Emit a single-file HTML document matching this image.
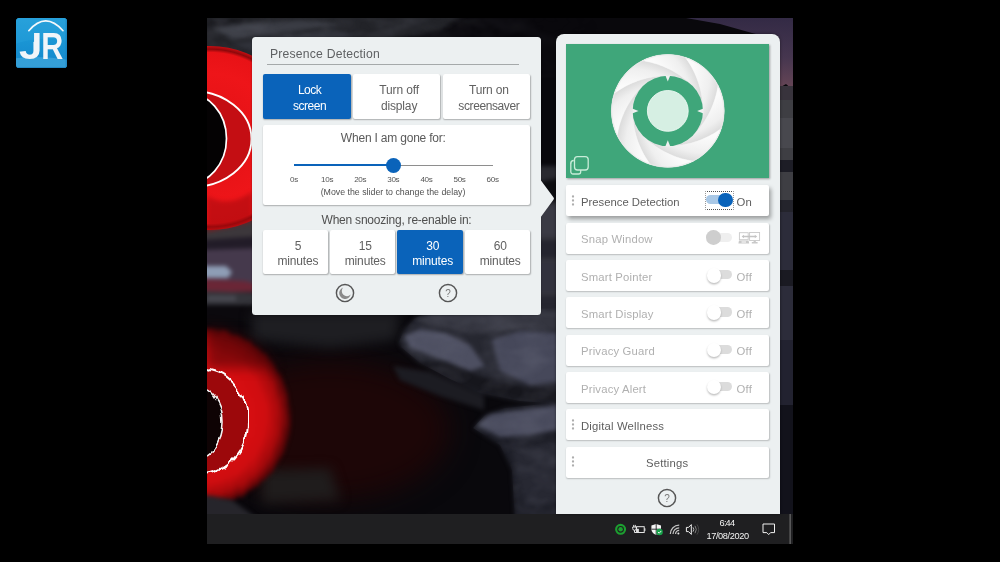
<!DOCTYPE html>
<html lang="en">
<head>
<meta charset="utf-8">
<title>Presence Detection</title>
<style>
html,body{margin:0;padding:0;background:#000;}
body{width:1000px;height:562px;position:relative;overflow:hidden;will-change:transform;font-family:"Liberation Sans",sans-serif;color:#555;}
.abs{position:absolute;}
#desk{position:absolute;left:207px;top:18px;width:586px;height:497px;overflow:hidden;background:#17151b;}
#taskbar{position:absolute;left:207px;top:514px;width:586px;height:30px;background:#1f1f21;}
/* left popup */
#pop{position:absolute;left:252px;top:37.2px;width:289px;height:277.6px;background:#ecf0f1;border-radius:3.5px;box-shadow:0 0 2px rgba(0,0,0,.35);}
.t{position:absolute;white-space:nowrap;text-align:center;transform:translateX(-50%);}
.btn{position:absolute;background:#fff;border-radius:2px;box-shadow:0.5px 1px 1.5px rgba(0,0,0,.28);color:#616161;font-size:12px;line-height:15.2px;text-align:center;letter-spacing:-0.15px;}
.btn.on{background:#0a63ba;color:#fff;}
.btn span{display:block;position:relative;left:2.6px;}
/* right panel */
#side{position:absolute;left:555.7px;top:34.2px;width:223.9px;height:480px;background:#ecf0f1;border-radius:8px 8px 0 0;box-shadow:0 0 3px rgba(0,0,0,.5);}
.row{position:absolute;left:566px;width:203.3px;height:31px;margin-top:-0.3px;background:#fff;border-radius:2px;box-shadow:0.5px 1px 1.5px rgba(0,0,0,.21);}
.row .lb{position:absolute;left:15px;top:1.8px;line-height:31px;font-size:11.3px;letter-spacing:0.18px;color:#b0b0b0;white-space:nowrap;}
.row .st{position:absolute;left:170.5px;top:1.8px;line-height:31px;font-size:11.3px;letter-spacing:0.3px;color:#b0b0b0;}
.row.act .lb,.row.act .st{color:#5e5e5e;}
</style>
</head>
<body>
<!-- JR logo -->
<div class="abs" id="logo" style="left:16px;top:18.3px;width:50.7px;height:50.1px;border-radius:3.5px;background:#1c97d5;overflow:hidden;">
  <svg class="abs" style="left:0;top:0" width="51" height="51" viewBox="16 18.3 51 51">
    <defs><linearGradient id="lg1" x1="0" y1="0" x2="0" y2="1"><stop offset="0" stop-color="#27a0da"/><stop offset="0.45" stop-color="#1a95d4"/><stop offset="0.75" stop-color="#168dcf"/><stop offset="1" stop-color="#1787ca"/></linearGradient><clipPath id="jclip"><path d="M34.05 18 H67 V70 H16 V46 L34.05 42 Z"/></clipPath></defs>
    <rect x="16" y="18.3" width="51" height="51" fill="url(#lg1)"/>
    <path d="M16 44 Q40 36 67 41 V18.3 H16 Z" fill="#2aa2dc" opacity="0.35"/>
    <path d="M16 58.5 Q42 55.5 67 60 V69.4 H16 Z" fill="#49addf" opacity="0.6"/>
    <path d="M66.2 19 V68 H17" fill="none" stroke="#1577b6" stroke-width="1" opacity="0.7"/>
    <path d="M28.8 31 Q45.6 11.4 63 31" fill="none" stroke="#f4f8fb" stroke-width="1.7" stroke-linecap="round"/>
    <text x="19" y="59.8" font-family="Liberation Sans, sans-serif" font-weight="bold" font-size="37.4" fill="#f1f5f9" textLength="23.4" lengthAdjust="spacingAndGlyphs" clip-path="url(#jclip)">J</text>
    <text x="41.3" y="59.8" font-family="Liberation Sans, sans-serif" font-weight="bold" font-size="37.4" fill="#f1f5f9" textLength="22" lengthAdjust="spacingAndGlyphs">R</text>
  </svg>
</div>

<div id="desk">
  <svg class="abs" style="left:0;top:0" width="586" height="497" viewBox="207 18 586 497">
    <defs>
      <filter id="b1" color-interpolation-filters="sRGB" x="-20%" y="-20%" width="140%" height="140%"><feGaussianBlur stdDeviation="0.7"/></filter>
      <filter id="b2" color-interpolation-filters="sRGB" x="-20%" y="-20%" width="140%" height="140%"><feGaussianBlur stdDeviation="2"/></filter>
      <filter id="b3" color-interpolation-filters="sRGB" x="-20%" y="-20%" width="140%" height="140%"><feGaussianBlur stdDeviation="3"/></filter>
      <filter id="b6" color-interpolation-filters="sRGB" x="-60%" y="-60%" width="220%" height="220%"><feGaussianBlur stdDeviation="6"/></filter>
      <filter id="b12" color-interpolation-filters="sRGB" x="-40%" y="-40%" width="180%" height="180%"><feGaussianBlur stdDeviation="14"/></filter>
      <filter id="rough" color-interpolation-filters="sRGB" x="-10%" y="-10%" width="120%" height="120%"><feTurbulence type="fractalNoise" baseFrequency="0.09 0.03" numOctaves="2" seed="4" result="n"/><feDisplacementMap in="SourceGraphic" in2="n" scale="11" xChannelSelector="R" yChannelSelector="G"/><feGaussianBlur stdDeviation="0.55"/></filter>
      <filter id="rough2" color-interpolation-filters="sRGB" x="-10%" y="-10%" width="120%" height="120%"><feTurbulence type="fractalNoise" baseFrequency="0.25 0.05" numOctaves="2" seed="9" result="n"/><feDisplacementMap in="SourceGraphic" in2="n" scale="5" xChannelSelector="R" yChannelSelector="G"/><feGaussianBlur stdDeviation="2.2"/></filter>
      <filter id="rock" color-interpolation-filters="sRGB" x="0" y="0" width="100%" height="100%"><feTurbulence type="fractalNoise" baseFrequency="0.035 0.06" numOctaves="4" seed="11" result="n"/><feColorMatrix in="n" type="matrix" values="0 0 0 0 0  0 0 0 0 0  0 0 0 0 0  1.6 0 0 0 -0.55" result="a"/><feComposite in="SourceGraphic" in2="a" operator="in"/><feGaussianBlur stdDeviation="0.8"/></filter>
      <linearGradient id="sky" x1="0" y1="0" x2="0" y2="1"><stop offset="0" stop-color="#332a45"/><stop offset="0.55" stop-color="#46364f"/><stop offset="1" stop-color="#684656"/></linearGradient>
      <radialGradient id="orb" cx="50%" cy="50%" r="50%"><stop offset="0" stop-color="#e01014"/><stop offset="0.7" stop-color="#ee1519"/><stop offset="0.93" stop-color="#e81216"/><stop offset="0.965" stop-color="#8e080b"/><stop offset="1" stop-color="#c90d11"/></radialGradient>
      <radialGradient id="refl" gradientUnits="userSpaceOnUse" cx="200" cy="417" r="92"><stop offset="0" stop-color="#b0090c"/><stop offset="0.5" stop-color="#d80e11"/><stop offset="0.72" stop-color="#cf0d10"/><stop offset="0.86" stop-color="#a4090b"/><stop offset="1" stop-color="#3c0406"/></radialGradient>
      <linearGradient id="fadeg" gradientUnits="userSpaceOnUse" x1="207" y1="0" x2="600" y2="0"><stop offset="0" stop-color="#fff"/><stop offset="0.45" stop-color="#bbb"/><stop offset="1" stop-color="#000"/></linearGradient><mask id="fadeR" maskUnits="userSpaceOnUse" x="207" y="18" width="400" height="60"><rect x="207" y="18" width="400" height="60" fill="url(#fadeg)"/></mask><clipPath id="rockclip"><path d="M399 342 L404 330 L415 318 L430 312 L562 308 L562 404 L520 401 L480 393 L450 379 L420 363 L401 347 Z"/><path d="M473 428 L485 415 L505 408 L562 402 L562 520 L515 520 L512 470 L500 445 Z"/></clipPath><clipPath id="deskclip"><rect x="207" y="18" width="586" height="497"/></clipPath>
    </defs>
    <g clip-path="url(#deskclip)">
    <rect x="207" y="18" width="586" height="497" fill="#09080c"/>
    <!-- sky top right -->
    <path d="M686 18 L793 18 L793 90 L786 84 L779 88 L779 40 L752 33 L720 24 Z" fill="url(#sky)"/>
    <path d="M686 18 L720 24 L752 33 L779 42 L779 18 Z" fill="url(#sky)" opacity="0"/>
    <!-- right strip rocks -->
    <g filter="url(#b1)">
      <rect x="776" y="86" width="18" height="120" fill="#3e3e43"/>
      <rect x="776" y="86" width="18" height="14" fill="#38333c"/>
      <rect x="776" y="118" width="18" height="30" fill="#48484e"/>
      <rect x="776" y="160" width="18" height="12" fill="#1d1d26"/>
      <rect x="776" y="200" width="18" height="14" fill="#24242c"/>
      <rect x="776" y="212" width="18" height="130" fill="#2c2c3a"/>
      <rect x="776" y="270" width="18" height="16" fill="#1a1a22"/>
      <rect x="776" y="340" width="18" height="70" fill="#222230"/>
      <rect x="776" y="405" width="18" height="110" fill="#12121b"/>
    </g>
    <!-- top-left rock texture -->
    <g filter="url(#b2)">
      <path d="M200 10 L470 10 L440 30 L380 44 L300 62 L200 78 Z" fill="#222328"/>
      <path d="M214 27 L300 20 L345 24 L232 40 Z" fill="#3a3c44"/>
      <path d="M230 44 L330 30 L360 36 L262 54 Z" fill="#30323a"/>
      <path d="M207 18 L260 18 L207 30 Z" fill="#0e0e12"/>
      
    </g>
    <g mask="url(#fadeR)"><rect x="207" y="18" width="400" height="60" fill="#5a5c66" filter="url(#rock)" opacity="0.5"/></g>
    <!-- strip between panels -->
    <g filter="url(#b2)">
      <rect x="536" y="166" width="26" height="150" fill="#34343c"/>
      <rect x="536" y="166" width="26" height="14" fill="#2a2a30"/>
      <path d="M536 182 L562 178 L562 200 L536 206 Z" fill="#0c0c10"/>
      <rect x="536" y="206" width="26" height="30" fill="#3a3a44"/>
      <rect x="536" y="240" width="26" height="18" fill="#24242e"/>
      <rect x="536" y="262" width="26" height="30" fill="#32323e"/>
      <rect x="536" y="296" width="26" height="20" fill="#262630"/>
    </g>
    <!-- rock under orb -->
    <g filter="url(#b2)">
      <path d="M200 226 L262 212 L262 246 L200 246 Z" fill="#3c373b"/>
      <path d="M200 240 L262 236 L262 254 L200 252 Z" fill="#221c28"/>
      <path d="M200 250 L262 248 L262 292 L200 292 Z" fill="#45394c"/>
      <path d="M200 266 L226 266 L232 272 L228 278 L200 278 Z" fill="#8e9db5"/>
      <path d="M200 279 L245 281 L262 286 L262 292 L200 292 Z" fill="#6a2636"/>
      <path d="M200 291 L262 293 L262 306 L200 306 Z" fill="#34343a"/>
      <path d="M207 296 L236 296 L236 301 L207 301 Z" fill="#4a4a52"/>
      <path d="M200 305 L262 305 L262 322 L200 322 Z" fill="#0b090d"/>
    </g>
    <!-- red orb -->
    <ellipse cx="210" cy="138" rx="94" ry="92" fill="url(#orb)"/>
    <path d="M207 196 C225 206 240 200 252 192 L252 222 L207 232 Z" fill="#a50a0e" opacity="0.55" filter="url(#b2)"/>
    <g filter="url(#b1)">
      <ellipse cx="190" cy="139" rx="61.5" ry="48.4" fill="#c40e13" stroke="#fff" stroke-width="1.9"/>
      <ellipse cx="186" cy="138.6" rx="40.5" ry="46" fill="#040203" stroke="#fff" stroke-width="1.7"/>
    </g>
    <!-- water glow -->
    <ellipse cx="330" cy="430" rx="120" ry="70" fill="#1d0607" filter="url(#b12)"/>
    <path d="M252 312 L400 312 L396 340 L330 348 L252 340 Z" fill="#1e1e22" filter="url(#b6)"/>
    <path d="M262 470 L330 468 L340 500 L262 504 Z" fill="#1f1c1c" filter="url(#b6)"/>
    <!-- lower rocks -->
    <g filter="url(#b2)">
      <path d="M393 366 L430 372 L484 396 L484 410 L440 396 L400 380 Z" fill="#1c1c22"/>
      <path d="M399 342 L404 330 L415 318 L430 312 L562 308 L562 404 L520 401 L480 393 L450 379 L420 363 L401 347 Z" fill="#262730"/>
      <path d="M404 336 L420 329 L446 333 L470 345 L485 366 L470 371 L440 359 L410 348 Z" fill="#4d4f61"/>
      <path d="M492 340 L520 331 L562 333 L562 381 L530 385 L500 371 Z" fill="#46485a"/>
      <path d="M415 319 L440 314 L520 314 L562 312 L562 330 L520 329 L470 334 L430 326 Z" fill="#34353f"/>
      <path d="M420 362 L450 378 L480 391 L520 399 L562 402 L562 388 L520 386 L480 376 L446 362 Z" fill="#16161c"/>
      <path d="M473 428 L485 415 L505 408 L562 402 L562 520 L515 520 L512 470 L500 445 Z" fill="#1e1f28"/>
      <path d="M477 425 L490 414 L520 410 L562 405 L562 429 L530 435 L500 437 Z" fill="#494b5d"/>
      <path d="M512 450 L562 440 L562 500 L525 505 Z" fill="#272832"/>
    </g>
    <g clip-path="url(#rockclip)"><rect x="396" y="298" width="166" height="220" fill="#8a8c9c" filter="url(#rock)" opacity="0.2"/></g>
    <!-- red reflection -->
    <ellipse cx="200" cy="417" rx="91" ry="89" fill="url(#refl)" filter="url(#rough2)"/>
    <path d="M207 326 Q250 330 278 368 L207 368 Z" fill="#4a0406" opacity="0.55" filter="url(#b6)"/>
    <g filter="url(#rough)">
      <ellipse cx="200" cy="421" rx="48" ry="53" fill="#9c080b" stroke="#ffffff" stroke-width="2"/>
      <ellipse cx="196" cy="422" rx="27" ry="35" fill="#0e0304" stroke="#f2f2f2" stroke-width="1.6"/>
    </g>
    <path d="M200 494 L232 500 L262 522 L200 522 Z" fill="#26252b" filter="url(#b2)"/>
    </g>
  </svg>
</div>
<div id="taskbar">
  <svg class="abs" style="left:0;top:0" width="586" height="30" viewBox="207 514 586 30">
    <!-- green app icon -->
    <circle cx="620.6" cy="529.3" r="4.45" fill="none" stroke="#1c9f30" stroke-width="2.15"/>
    <circle cx="620.6" cy="529.3" r="2.25" fill="#1c9f30"/>
    <!-- battery / plug -->
    <g fill="none" stroke="#f0f0f0" stroke-width="0.95">
      <rect x="636.6" y="526.7" width="7.6" height="5.8"/>
      <path d="M644.9 528.3 V530.9"/>
      <path d="M633.7 524.9 V526.9 M635.3 524.9 V526.9"/>
      <path d="M632.7 527 H636.3 V528.6 Q636.3 530.3 634.5 530.3 Q632.7 530.3 632.7 528.6 Z"/>
      <path d="M634.5 530.3 V532.5 H636.6"/>
    </g>
    <rect x="637.1" y="528.8" width="1.7" height="3.2" fill="#f0f0f0"/>
    <!-- shield -->
    <path d="M656.2 524 L661 525.6 V529.5 Q660.6 533 656.2 535 Q651.8 533 651.4 529.5 V525.6 Z" fill="#f4f4f4"/>
    <path d="M656.2 524 V535 M651.4 529.2 H661" stroke="#1f1f21" stroke-width="0.9" fill="none"/>
    <circle cx="659.6" cy="532" r="3.2" fill="#17a24a"/>
    <path d="M658 532 L659.2 533.2 L661.2 531" stroke="#fff" stroke-width="0.9" fill="none"/>
    <!-- wifi -->
    <g fill="none" stroke="#c4c4c4" stroke-width="1.25">
      <path d="M670.3 534 A8.8 8.8 0 0 1 679.2 525.2"/>
      <path d="M673 534 A6.2 6.2 0 0 1 679.2 527.8"/>
      <path d="M675.6 534 A3.6 3.6 0 0 1 679.2 530.4"/>
    </g>
    <circle cx="678.4" cy="533.4" r="1" fill="#e8e8e8"/>
    <!-- speaker -->
    <path d="M686.4 527.4 H688.5 L691.3 524.6 V534.4 L688.5 531.6 H686.4 Z" fill="none" stroke="#f0f0f0" stroke-width="1"/>
    <path d="M693 527.3 Q694.6 529.5 693 531.7" fill="none" stroke="#d0d0d0" stroke-width="0.9"/>
    <path d="M695 525.8 Q697.6 529.5 695 533.2" fill="none" stroke="#8a8a8a" stroke-width="0.9"/>
    <path d="M697 524.4 Q700.4 529.5 697 534.6" fill="none" stroke="#4a4a4a" stroke-width="0.9"/>
    <!-- clock -->
    <text x="719.6" y="525.7" font-family="Liberation Sans, sans-serif" font-size="9.2" fill="#f4f4f4" textLength="15.4" lengthAdjust="spacing">6:44</text>
    <text x="706.4" y="538.7" font-family="Liberation Sans, sans-serif" font-size="9.2" fill="#f4f4f4" textLength="42.8" lengthAdjust="spacing">17/08/2020</text>
    <!-- notification -->
    <path d="M763 524 H774.5 V532.6 H770.6 L768.7 534.6 L766.8 532.6 H763 Z" fill="none" stroke="#f0f0f0" stroke-width="1"/>
    <rect x="789.6" y="514" width="1" height="30" fill="#7c7c7c"/>
  </svg>
</div>

<!-- left popup -->
<div id="pop">
  <svg class="abs" style="left:288px;top:142.8px" width="15" height="38" viewBox="0 0 15 38"><path d="M0 0.5 H1 L13.6 17.6 Q14.4 18.6 13.6 19.6 L1 36.7 H0 Z" fill="#ecf0f1"/></svg>
  <div class="abs" style="left:18px;top:9px;font-size:12.2px;line-height:16px;color:#5f6163;white-space:nowrap;letter-spacing:0.2px;">Presence Detection</div>
  <div class="abs" style="left:15px;top:26.6px;width:252px;height:1.4px;background:#a5a9aa;"></div>

  <div class="btn on" style="left:11px;top:36.8px;width:88px;height:45.2px;"><span style="margin-top:9.2px;letter-spacing:-0.5px">Lock</span><span style="letter-spacing:-0.5px;top:0.7px">screen</span></div>
  <div class="btn" style="left:101px;top:36.8px;width:87px;height:45.2px;"><span style="margin-top:9.2px">Turn off</span><span style="top:0.7px">display</span></div>
  <div class="btn" style="left:190.5px;top:36.8px;width:87.5px;height:45.2px;"><span style="margin-top:9.2px">Turn on</span><span style="letter-spacing:-0.4px;top:0.7px">screensaver</span></div>

  <div class="btn" style="left:11px;top:88.3px;width:267px;height:79.5px;"></div>
  <div class="t" style="left:141.3px;top:92.8px;font-size:12px;line-height:16px;color:#5a5a5a;letter-spacing:-0.2px;">When I am gone for:</div>
  <div class="abs" style="left:42px;top:127.7px;width:199px;height:1px;background:#8e8e8e;"></div>
  <div class="abs" style="left:42px;top:127.2px;width:99px;height:2px;background:#0a63ba;"></div>
  <div class="abs" style="left:133.5px;top:120.9px;width:15px;height:15px;border-radius:50%;background:#0a63ba;"></div>
  <div class="t" style="left:42.0px;top:138px;font-size:8.1px;line-height:10px;color:#555;letter-spacing:-0.35px;">0s</div>
  <div class="t" style="left:75.1px;top:138px;font-size:8.1px;line-height:10px;color:#555;letter-spacing:-0.35px;">10s</div>
  <div class="t" style="left:108.2px;top:138px;font-size:8.1px;line-height:10px;color:#555;letter-spacing:-0.35px;">20s</div>
  <div class="t" style="left:141.3px;top:138px;font-size:8.1px;line-height:10px;color:#555;letter-spacing:-0.35px;">30s</div>
  <div class="t" style="left:174.4px;top:138px;font-size:8.1px;line-height:10px;color:#555;letter-spacing:-0.35px;">40s</div>
  <div class="t" style="left:207.5px;top:138px;font-size:8.1px;line-height:10px;color:#555;letter-spacing:-0.35px;">50s</div>
  <div class="t" style="left:240.6px;top:138px;font-size:8.1px;line-height:10px;color:#555;letter-spacing:-0.35px;">60s</div>
  <div class="t" style="left:141px;top:149.7px;font-size:8.8px;line-height:11px;color:#505050;">(Move the slider to change the delay)</div>

  <div class="t" style="left:144.5px;top:174.8px;font-size:12px;line-height:16px;color:#4f4f4f;letter-spacing:-0.22px;">When snoozing, re-enable in:</div>
  <div class="btn" style="left:10.7px;top:192.9px;width:65.3px;height:43.8px;"><span style="margin-top:9.4px">5</span><span style="top:-0.9px">minutes</span></div>
  <div class="btn" style="left:78px;top:192.9px;width:65.3px;height:43.8px;"><span style="margin-top:9.4px">15</span><span style="top:-0.9px">minutes</span></div>
  <div class="btn on" style="left:145.3px;top:192.9px;width:65.6px;height:43.8px;"><span style="margin-top:9.4px">30</span><span style="top:-0.9px">minutes</span></div>
  <div class="btn" style="left:213px;top:192.9px;width:65.3px;height:43.8px;"><span style="margin-top:9.4px">60</span><span style="top:-0.9px">minutes</span></div>

  <svg class="abs" style="left:82px;top:244.8px" width="22" height="22" viewBox="0 0 22 22">
    <circle cx="11" cy="11" r="8.6" fill="none" stroke="#565656" stroke-width="1.45"/>
    <path d="M9.2 5.6 A5.8 5.8 0 1 0 16.6 12.6 A5 5 0 0 1 9.2 5.6 Z" fill="#8a8a8a"/>
  </svg>
  <svg class="abs" style="left:184.5px;top:244.8px" width="22" height="22" viewBox="0 0 22 22">
    <circle cx="11" cy="11" r="8.6" fill="none" stroke="#565656" stroke-width="1.45"/>
    <text x="11" y="14.6" text-anchor="middle" font-family="Liberation Sans, sans-serif" font-size="10" fill="#777">?</text>
  </svg>
</div>

<!-- right panel -->
<div id="side"></div>
<div class="abs" id="hero" style="left:566.2px;top:44.2px;width:203.3px;height:134.3px;overflow:hidden;background:#3fa67a;box-shadow:0.5px 1px 2px rgba(0,0,0,.35);">
  <svg class="abs" style="left:0;top:0" width="204" height="135" viewBox="0 0 204 135">
    <defs>
      <radialGradient id="bg" gradientUnits="userSpaceOnUse" cx="101.80" cy="121.54" r="89.84"><stop offset="0.711" stop-color="#fbfbfb"/><stop offset="0.900" stop-color="#efefef"/><stop offset="1" stop-color="#dcdcdc"/></radialGradient>
    </defs>
    <circle cx="101.8" cy="66.9" r="56.4" fill="#f2f2f2"/>
    <path id="blade" d="M101.80 31.70 L99.41 31.73 L97.01 31.83 L94.62 31.99 L92.24 32.21 L89.86 32.50 L87.49 32.85 L85.13 33.26 L82.78 33.74 L80.45 34.27 L78.13 34.87 L75.83 35.54 L73.55 36.26 L71.28 37.04 L69.04 37.89 L66.82 38.79 L64.63 39.75 L62.46 40.77 L60.32 41.85 L58.21 42.98 L56.14 44.17 L54.09 45.42 L52.08 46.72 L50.10 48.07 L48.16 49.47 L47.14 53.02 L46.34 56.62 L45.79 60.27 L45.48 63.95 L45.40 67.64 L45.57 71.33 L45.98 74.99 L46.63 78.63 L47.52 82.21 L48.64 85.73 L49.98 89.16 L51.55 92.51 L51.93 90.14 L52.37 87.79 L52.87 85.44 L53.44 83.12 L54.07 80.81 L54.76 78.51 L55.51 76.24 L56.32 73.99 L57.19 71.75 L58.12 69.55 L59.11 67.37 L60.15 65.21 L61.26 63.09 L62.42 60.99 L63.63 58.93 L64.90 56.90 L66.23 54.90 L67.60 52.94 L69.03 51.02 L70.51 49.13 L72.04 47.29 L73.61 45.49 L75.24 43.73 L76.91 42.01 L78.59 40.44 L80.37 38.97 L82.24 37.63 L84.20 36.42 L86.23 35.33 L88.33 34.38 L90.49 33.57 L92.69 32.90 L94.93 32.38 L97.21 32.00 L99.50 31.78 Z" fill="url(#bg)" stroke="url(#bg)" stroke-width="0.4"/>
    <use href="#blade" transform="rotate(45 101.8 66.9)"/><use href="#blade" transform="rotate(90 101.8 66.9)"/><use href="#blade" transform="rotate(135 101.8 66.9)"/><use href="#blade" transform="rotate(180 101.8 66.9)"/><use href="#blade" transform="rotate(225 101.8 66.9)"/><use href="#blade" transform="rotate(270 101.8 66.9)"/><use href="#blade" transform="rotate(315 101.8 66.9)"/>
    <circle cx="101.8" cy="66.9" r="56.1" fill="none" stroke="#e9e9e9" stroke-width="0.8"/>
    <circle cx="101.8" cy="66.9" r="35.2" fill="#3fa67a"/>
    <circle cx="101.8" cy="66.9" r="20.4" fill="#d6efe3" stroke="#ecf8f2" stroke-width="0.9"/>
    <g fill="#f0f0f0">
      <path d="M99.3 31.2 L104.3 31.2 L101.8 37.6 Z"/>
      <path d="M99.3 102.6 L104.3 102.6 L101.8 96.2 Z"/>
      <path d="M66.1 64.4 L66.1 69.4 L72.5 66.9 Z"/>
      <path d="M137.5 64.4 L137.5 69.4 L131.1 66.9 Z"/>
    </g>
    <g fill="none" stroke="#c8ecd9" stroke-width="1.3">
      <path d="M8.5 119 V128 a2.2 2.2 0 0 0 2.2 2.2 H16.2 a2.2 2.2 0 0 0 2.2 -2.2 V126.2" transform="translate(-3.7 -0.2)"/>
      <rect x="8.5" y="112.6" width="13.7" height="13.4" rx="3"/>
      <path d="M4.8 119.5 a3 3 0 0 1 3 -3"/>
    </g>
  </svg>
</div>
<div class="row act" style="top:185.5px;box-shadow:2px 3px 4px rgba(0,0,0,.35);"><svg class="abs" style="left:5px;top:9.5px" width="4" height="12" viewBox="0 0 4 12"><circle cx="2" cy="1.5" r="1.15" fill="#adadad"/><circle cx="2" cy="5.5" r="1.15" fill="#adadad"/><circle cx="2" cy="9.5" r="1.15" fill="#adadad"/></svg><div class="lb" style="letter-spacing:0">Presence Detection</div><div class="abs" style="left:138.8px;top:5.9px;width:29px;height:18.8px;border:1px dotted #505050;border-left-color:#9a9a9a;border-right-color:#9a9a9a;box-sizing:border-box;"></div><div class="abs" style="left:140.3px;top:9.8px;width:24px;height:9.2px;border-radius:4.6px;background:#a9c8e6;"></div><div class="abs" style="left:152.1px;top:7.3px;width:14.7px;height:14.7px;border-radius:50%;background:#0a63ba;"></div><div class="st">On</div></div>
<div class="row " style="top:222.8px;"><div class="lb">Snap Window</div><div class="abs" style="left:142px;top:10.2px;width:23.5px;height:9px;border-radius:4.5px;background:#efefef;"></div><div class="abs" style="left:140.3px;top:7.6px;width:14.6px;height:14.6px;border-radius:50%;background:#cecece;"></div><svg class="abs" style="left:172px;top:9px" width="24" height="13" viewBox="738 231.8 24 13"><g fill="none" stroke="#c9c9c9" stroke-width="0.9"><rect x="739.4" y="232.5" width="8.8" height="7"/><rect x="749.6" y="232.3" width="10" height="8"/></g><path d="M739 240.4 H748.6 L749.2 243.2 H738.4 Z M741.5 241.4 V242.3 H746 V241.4 Z" fill="#c9c9c9" fill-rule="evenodd"/><path d="M753.6 240.6 H755.8 V241.8 H757.6 V243.2 H751.8 V241.8 H753.6 Z" fill="#c9c9c9"/><path d="M741.6 236.3 L744 234.5 V235.6 H754.8 V234.5 L757.2 236.3 L754.8 238.1 V237 H744 V238.1 Z" fill="#c4c4c4"/></svg></div>
<div class="row " style="top:260.2px;"><div class="lb">Smart Pointer</div><div class="abs" style="left:142px;top:10.2px;width:24px;height:9.2px;border-radius:4.6px;background:#dcdcdc;"></div><div class="abs" style="left:140.5px;top:8.2px;width:14.5px;height:14.5px;border-radius:50%;background:#fff;box-shadow:0 1.5px 2px rgba(0,0,0,.25);"></div><div class="st">Off</div></div>
<div class="row " style="top:297.5px;"><div class="lb">Smart Display</div><div class="abs" style="left:142px;top:10.2px;width:24px;height:9.2px;border-radius:4.6px;background:#dcdcdc;"></div><div class="abs" style="left:140.5px;top:8.2px;width:14.5px;height:14.5px;border-radius:50%;background:#fff;box-shadow:0 1.5px 2px rgba(0,0,0,.25);"></div><div class="st">Off</div></div>
<div class="row " style="top:334.8px;"><div class="lb">Privacy Guard</div><div class="abs" style="left:142px;top:10.2px;width:24px;height:9.2px;border-radius:4.6px;background:#dcdcdc;"></div><div class="abs" style="left:140.5px;top:8.2px;width:14.5px;height:14.5px;border-radius:50%;background:#fff;box-shadow:0 1.5px 2px rgba(0,0,0,.25);"></div><div class="st">Off</div></div>
<div class="row " style="top:372.1px;"><div class="lb">Privacy Alert</div><div class="abs" style="left:142px;top:10.2px;width:24px;height:9.2px;border-radius:4.6px;background:#dcdcdc;"></div><div class="abs" style="left:140.5px;top:8.2px;width:14.5px;height:14.5px;border-radius:50%;background:#fff;box-shadow:0 1.5px 2px rgba(0,0,0,.25);"></div><div class="st">Off</div></div>
<div class="row act" style="top:409.5px;"><svg class="abs" style="left:5px;top:9.5px" width="4" height="12" viewBox="0 0 4 12"><circle cx="2" cy="1.5" r="1.15" fill="#adadad"/><circle cx="2" cy="5.5" r="1.15" fill="#adadad"/><circle cx="2" cy="9.5" r="1.15" fill="#adadad"/></svg><div class="lb">Digital Wellness</div></div>
<div class="row act" style="top:446.9px;"><svg class="abs" style="left:5px;top:9.5px" width="4" height="12" viewBox="0 0 4 12"><circle cx="2" cy="1.5" r="1.15" fill="#adadad"/><circle cx="2" cy="5.5" r="1.15" fill="#adadad"/><circle cx="2" cy="9.5" r="1.15" fill="#adadad"/></svg><div class="lb" style="left:80px;">Settings</div></div>
<svg class="abs" style="left:656px;top:487px" width="22" height="22" viewBox="0 0 22 22">
    <circle cx="11" cy="11" r="8.6" fill="none" stroke="#565656" stroke-width="1.45"/>
    <text x="11" y="14.6" text-anchor="middle" font-family="Liberation Sans, sans-serif" font-size="10" fill="#777">?</text>
  </svg>

</body>
</html>
